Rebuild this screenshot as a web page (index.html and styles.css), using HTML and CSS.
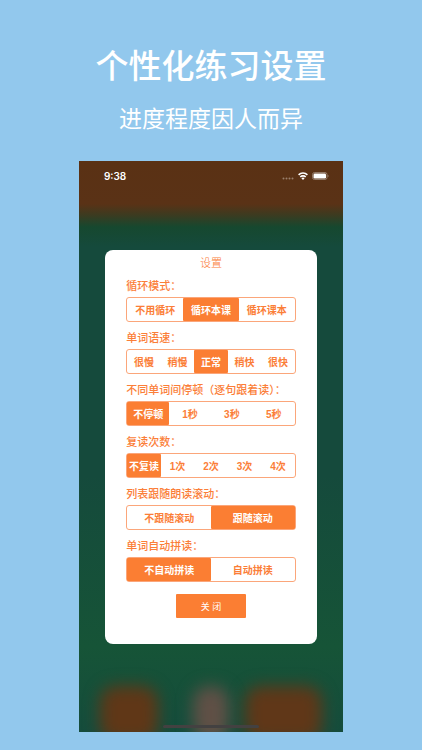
FILE: index.html
```html
<!doctype html>
<html lang="zh-CN">
  <head>
    <meta charset="UTF-8" />
    <meta name="viewport" content="width=device-width, initial-scale=1.0" />
    <title>个性化练习设置</title>
    <link rel="stylesheet" href="styles.css">
  </head>
  <body>
    <header class="intro">
      <h1>个性化练习设置</h1>
      <p>进度程度因人而异</p>
    </header>

    <main class="phone">
      <div class="backdrop" aria-hidden="true">
        <span class="glow glow-left"></span>
        <span class="glow glow-center"></span>
        <span class="glow glow-right"></span>
      </div>

      <div class="status-bar">
        <time>9:38</time>
        <div class="status-icons">
          <svg width="12" height="3" viewBox="0 0 12 3" fill="#9a7f6c">
            <circle cx="1.5" cy="1.5" r="1"/><circle cx="4.5" cy="1.5" r="1"/><circle cx="7.5" cy="1.5" r="1"/><circle cx="10.5" cy="1.5" r="1"/>
          </svg>
          <svg class="wifi" width="10" height="8" viewBox="0 0 20 16" fill="none" stroke="#fff" stroke-width="3.2">
            <path d="M1.2 5.800a12.400 12.400 0 0 1 17.600 0"/>
            <path d="M4.600 10a7.600 7.600 0 0 1 10.800 0"/>
            <path d="M10 16 6.800 12.600a4.400 4.400 0 0 1 6.400 0z" fill="#fff" stroke="none"/>
          </svg>
          <svg class="battery" width="17" height="8" viewBox="0 0 34 16">
            <rect x="1" y="1" width="29" height="14" rx="4" fill="none" stroke="#a08a7a" stroke-width="1.6"/>
            <rect x="3" y="3" width="25" height="10" rx="2.4" fill="#fff"/>
            <path d="M31.5 5.5c2 .6 2 4.400 0 5z" fill="#a08a7a"/>
          </svg>
        </div>
      </div>

      <form class="settings">
        <h2>设置</h2>

        <fieldset>
          <legend>循环模式：</legend>
          <div class="segments">
            <label><input type="radio" name="loop"><span>不用循环</span></label>
            <label><input type="radio" name="loop" checked><span>循环本课</span></label>
            <label><input type="radio" name="loop"><span>循环课本</span></label>
          </div>
        </fieldset>

        <fieldset>
          <legend>单词语速：</legend>
          <div class="segments">
            <label><input type="radio" name="speed"><span>很慢</span></label>
            <label><input type="radio" name="speed"><span>稍慢</span></label>
            <label><input type="radio" name="speed" checked><span>正常</span></label>
            <label><input type="radio" name="speed"><span>稍快</span></label>
            <label><input type="radio" name="speed"><span>很快</span></label>
          </div>
        </fieldset>

        <fieldset>
          <legend>不同单词间停顿（逐句跟着读）：</legend>
          <div class="segments">
            <label><input type="radio" name="pause" checked><span>不停顿</span></label>
            <label><input type="radio" name="pause"><span>1秒</span></label>
            <label><input type="radio" name="pause"><span>3秒</span></label>
            <label><input type="radio" name="pause"><span>5秒</span></label>
          </div>
        </fieldset>

        <fieldset>
          <legend>复读次数：</legend>
          <div class="segments">
            <label><input type="radio" name="repeat" checked><span>不复读</span></label>
            <label><input type="radio" name="repeat"><span>1次</span></label>
            <label><input type="radio" name="repeat"><span>2次</span></label>
            <label><input type="radio" name="repeat"><span>3次</span></label>
            <label><input type="radio" name="repeat"><span>4次</span></label>
          </div>
        </fieldset>

        <fieldset>
          <legend>列表跟随朗读滚动：</legend>
          <div class="segments">
            <label><input type="radio" name="scroll"><span>不跟随滚动</span></label>
            <label><input type="radio" name="scroll" checked><span>跟随滚动</span></label>
          </div>
        </fieldset>

        <fieldset>
          <legend>单词自动拼读：</legend>
          <div class="segments">
            <label><input type="radio" name="spell" checked><span>不自动拼读</span></label>
            <label><input type="radio" name="spell"><span>自动拼读</span></label>
          </div>
        </fieldset>

        <button type="button" class="close-button">关 闭</button>
      </form>

      <div class="home-indicator"></div>
    </main>
  </body>
</html>
```

FILE: styles.css
```css
* {
  box-sizing: border-box;
}

body {
  margin: 0;
  min-height: 100vh;
  background-color: #92c8ed;
  font-family: "Liberation Sans", "Noto Sans CJK SC", sans-serif;
}

.intro {
  padding-top: 42px;
  color: #fff;
  text-align: center;
}

.intro h1 {
  margin: 0;
  font-family: "Noto Sans CJK SC", sans-serif;
  font-size: 33px;
  font-weight: 500;
  line-height: 44px;
}

.intro p {
  margin: 16px 0 0;
  font-family: "Noto Sans CJK SC", sans-serif;
  font-size: 23px;
  font-weight: 400;
  line-height: 30px;
}

/* Phone screen */
.phone {
  position: relative;
  display: flex;
  flex-direction: column;
  align-items: center;
  width: 62.6%;
  aspect-ratio: 264 / 571;
  margin: 29px auto 0;
  padding-bottom: 4px;
  overflow: hidden;
  background: linear-gradient(#5a3114 0, #5a3216 43px, #3c3b20 54px, #16482f 66px, #154a3c 86px, #154a3c 55%, #165437 85%, #154c3c 100%);
}

.backdrop {
  position: absolute;
  inset: 0;
}

.glow {
  position: absolute;
  bottom: -10px;
  height: 56px;
  border-radius: 16px;
  filter: blur(8px);
}

.glow-left {
  left: 8%;
  width: 22%;
  background-color: #603717;
}

.glow-center {
  left: 43%;
  width: 14%;
  background-color: #605046;
}

.glow-right {
  left: 63%;
  width: 29%;
  background-color: #603718;
}

.status-bar {
  position: relative;
  display: flex;
  justify-content: space-between;
  align-items: center;
  width: 100%;
  height: 29px;
  padding: 0 14px 0 25px;
  color: #fff;
}

.status-bar time {
  font-family: Inter, sans-serif;
  font-size: 10px;
  font-weight: 600;
}

.status-icons {
  display: flex;
  align-items: center;
  gap: 4px;
}

.status-icons svg:first-child {
  margin-top: 5px;
}

/* Settings dialog */
.settings {
  position: relative;
  width: 80%;
  margin-top: 60px;
  padding: 3px 21px 26px;
  border-radius: 8px;
  background-color: #fff;
  color: #fb7e38;
}

.settings h2 {
  margin: 0 0 2px;
  font-size: 11px;
  font-weight: 300;
  line-height: 20px;
  text-align: center;
}

.settings fieldset {
  min-width: 0;
  margin: 0;
  padding: 0;
  border: 0;
}

.settings legend {
  padding: 0;
  font-size: 11px;
  font-weight: 500;
  line-height: 22px;
  white-space: nowrap;
}

.settings fieldset + fieldset legend {
  padding-top: 5px;
}

.segments {
  display: flex;
  height: 25px;
  border: 1px solid #fba67a;
  border-radius: 3px;
}

.segments label {
  position: relative;
  flex: 1;
  cursor: pointer;
}

.segments input {
  position: absolute;
  inset: 0;
  margin: 0;
  opacity: 0;
}

.segments span {
  display: flex;
  justify-content: center;
  align-items: center;
  height: 100%;
  border-radius: 1px;
  font-size: 10px;
  font-weight: 600;
  white-space: nowrap;
}

.segments input:checked + span {
  background-color: #fb7e33;
  color: #fff;
}

.segments input:focus-visible + span {
  outline: 2px solid #c9571a;
}

.close-button {
  display: block;
  width: 70px;
  height: 24px;
  margin: 12px auto 0;
  padding: 0;
  border: 0;
  border-radius: 1px;
  background-color: #fb7e33;
  color: #fff;
  font-family: inherit;
  font-size: 9px;
  cursor: pointer;
}

.home-indicator {
  position: relative;
  width: 36%;
  height: 3px;
  margin-top: auto;
  border-radius: 2px;
  background-color: #434141;
}
```
